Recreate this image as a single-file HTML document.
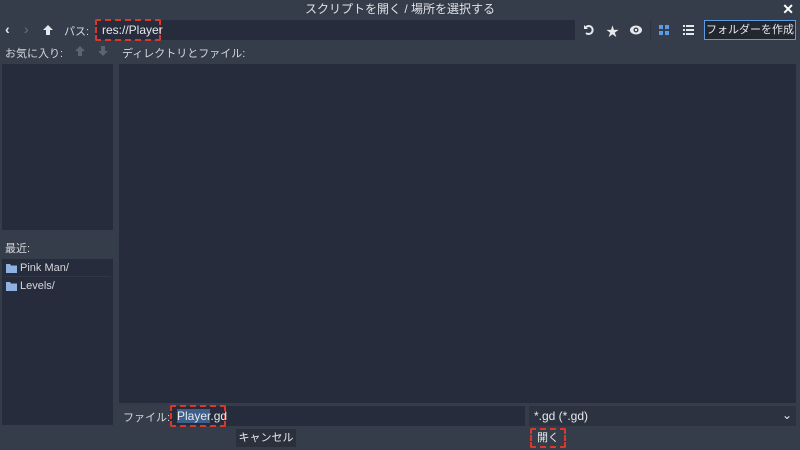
<!DOCTYPE html>
<html><head><meta charset="utf-8"><style>
*{margin:0;padding:0;box-sizing:border-box}
body{width:800px;height:450px;background:#363d4a;font-family:"Liberation Sans","Noto Sans CJK JP",sans-serif;font-size:11px;color:#d4d7dc;position:relative;overflow:hidden}
.a{position:absolute}
.p{background:#262c3b}
.dash{border:2px dashed #d8392b;border-radius:2px}
</style></head><body>
<div class="a" style="left:0;top:0;width:800px;height:18px;text-align:center;line-height:18px;font-size:12px;color:#e0e2e6">スクリプトを開く / 場所を選択する</div>
<div class="a" style="right:6px;top:1px;font-size:14px;color:#fff;font-weight:bold">✕</div>
<div class="a" style="left:5px;top:21px;font-size:14px;font-weight:bold;color:#e6e8ec">‹</div>
<div class="a" style="left:24px;top:21px;font-size:14px;color:#6b7280">›</div>
<svg class="a" style="left:43px;top:25px" width="10" height="10" viewBox="0 0 10 10"><path d="M5 0L10 5H7V10H3V5H0z" fill="#e6e8ec"/></svg>
<div class="a" style="left:64px;top:23px">パス:</div>
<div class="a p" style="left:95px;top:20px;width:480px;height:20px"></div>
<div class="a dash" style="left:95px;top:19px;width:66px;height:22px;padding:2px 5px;font-size:12px;color:#e6e8ec">res://Player</div>
<svg class="a" style="left:583px;top:24px" width="12" height="12" viewBox="0 0 12 12"><path d="M3 3a4 4 0 1 1 0 6" stroke="#e6e8ec" stroke-width="2" fill="none"/><path d="M1 1v4h4z" fill="#e6e8ec"/></svg>
<div class="a" style="left:606px;top:21px;font-size:13px;color:#e6e8ec">★</div>
<svg class="a" style="left:629px;top:24px" width="14" height="12" viewBox="0 0 14 12"><ellipse cx="7" cy="6" rx="6" ry="4.5" fill="#e6e8ec"/><circle cx="7" cy="6" r="2.5" fill="#363d4a"/><circle cx="7" cy="6" r="1.2" fill="#e6e8ec"/></svg>
<div class="a" style="left:650px;top:21px;width:1px;height:18px;background:#2c3240"></div>
<svg class="a" style="left:659px;top:25px" width="10" height="10"><rect x="0" y="0" width="4" height="4" fill="#5c9ce6"/><rect x="6" y="0" width="4" height="4" fill="#5c9ce6"/><rect x="0" y="6" width="4" height="4" fill="#5c9ce6"/><rect x="6" y="6" width="4" height="4" fill="#5c9ce6"/></svg>
<svg class="a" style="left:683px;top:25px" width="11" height="10"><g fill="#e6e8ec"><rect x="0" y="0" width="2" height="2"/><rect x="3" y="0" width="8" height="2"/><rect x="0" y="4" width="2" height="2"/><rect x="3" y="4" width="8" height="2"/><rect x="0" y="8" width="2" height="2"/><rect x="3" y="8" width="8" height="2"/></g></svg>
<div class="a" style="left:704px;top:20px;width:92px;height:20px;border:1px solid #5c9ce6;background:#21262f;text-align:center;line-height:18px;font-size:11px;color:#e6e8ec">フォルダーを作成</div>
<div class="a" style="left:5px;top:45px">お気に入り:</div>
<svg class="a" style="left:75px;top:46px" width="10" height="10" viewBox="0 0 10 10"><path d="M5 0L10 5H7V10H3V5H0z" fill="#5d6470"/></svg>
<svg class="a" style="left:98px;top:46px" width="10" height="10" viewBox="0 0 10 10"><path d="M5 10L10 5H7V0H3V5H0z" fill="#5d6470"/></svg>
<div class="a" style="left:122px;top:45px">ディレクトリとファイル:</div>
<div class="a p" style="left:2px;top:64px;width:111px;height:166px"></div>
<div class="a" style="left:5px;top:240px">最近:</div>
<div class="a p" style="left:2px;top:259px;width:111px;height:166px"></div>
<svg class="a" style="left:6px;top:264px" width="11" height="9"><path d="M0 0h4l1 1.5h6V9H0z" fill="#8fb3e0"/></svg>
<div class="a" style="left:20px;top:262px;font-size:11px">Pink Man/</div>
<div class="a" style="left:5px;top:276px;width:106px;height:1px;background:#303746"></div>
<svg class="a" style="left:6px;top:282px" width="11" height="9"><path d="M0 0h4l1 1.5h6V9H0z" fill="#8fb3e0"/></svg>
<div class="a" style="left:20px;top:280px;font-size:11px">Levels/</div>
<div class="a p" style="left:119px;top:64px;width:677px;height:339px"></div>
<div class="a" style="left:123px;top:409px">ファイル:</div>
<div class="a p" style="left:170px;top:406px;width:355px;height:20px"></div>
<div class="a dash" style="left:170px;top:405px;width:56px;height:22px;padding:2px 5px;font-size:12px;color:#e6e8ec"><span style="background:#3e5f8a">Player</span>.gd</div>
<div class="a" style="left:529px;top:406px;width:267px;height:20px;background:#2c3240;padding:3px 5px;font-size:12px;color:#e6e8ec">*.gd (*.gd)<span style="position:absolute;right:4px;top:2px">⌄</span></div>
<div class="a" style="left:236px;top:429px;width:60px;height:18px;background:#2a303c;text-align:center;line-height:18px;font-size:11px;color:#e6e8ec">キャンセル</div>
<div class="a dash" style="left:530px;top:428px;width:36px;height:20px;text-align:center;line-height:16px;font-size:11px;color:#e6e8ec">開く</div>
</body></html>
